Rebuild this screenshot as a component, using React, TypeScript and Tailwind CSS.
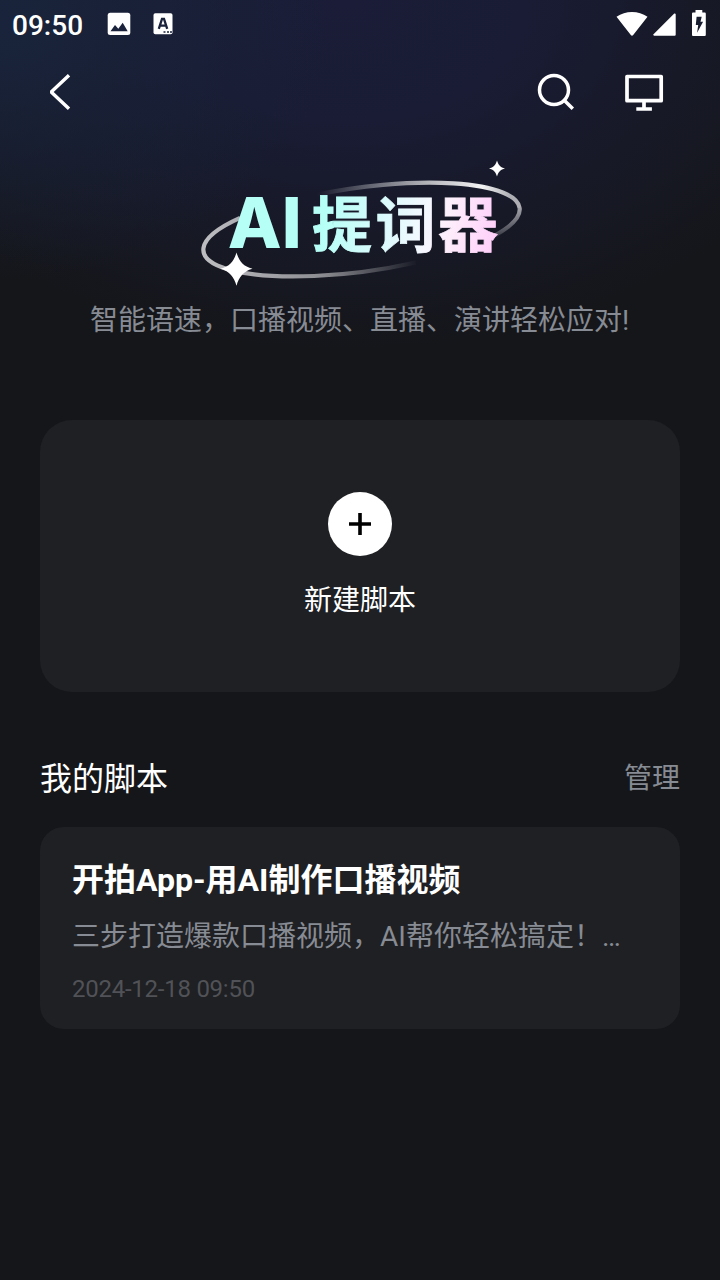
import { clsx } from "clsx";

type Script = {
  id: number;
  title: string;
  preview: string;
  createdAt: string;
};

const scripts: Script[] = [
  {
    id: 1,
    title: "开拍App-用AI制作口播视频",
    preview: "三步打造爆款口播视频，AI帮你轻松搞定！…",
    createdAt: "2024-12-18 09:50"
  }
];

function StatusBar() {
  return (
    <div className="flex h-12 items-center justify-between pl-3 pr-[13px]">
      <div className="flex items-center">
        <span className="w-[95px] pt-1 text-[28px] font-medium leading-[50px] text-white">09:50</span>
        <svg width="24" height="24" viewBox="0 0 24 24" fill="none">
          <rect x="0.7" y="0.7" width="22.6" height="22.4" rx="2.5" fill="#fff" />
          <path d="M3.5 19.2 8 12.9l3.3 3.9 4.4-6.1 5 8.5Z" fill="#1a233b" />
        </svg>
        <svg className="ml-[22px]" width="20" height="24" viewBox="0 0 20 24" fill="none">
          <rect x="0.5" y="1.3" width="19" height="21" rx="1.8" fill="#fff" />
          <path d="m5.8 16.8 3.2-10h2l3.2 10M7 13.7h6" stroke="#1a233b" strokeWidth="2.3" />
          <path d="M10.5 20h2M14 20h2M17 20h2" stroke="#1a233b" strokeWidth="1.6" />
        </svg>
      </div>
      <div className="flex items-center">
        <svg width="32" height="26" viewBox="0 0 32 26" fill="#fff">
          <path d="M0.5 5.8C9.5-.6 22.5-.6 31.5 5.8L17.2 23.9a1.5 1.5 0 0 1-2.4 0Z" />
        </svg>
        <svg className="ml-[5px]" width="23" height="26" viewBox="0 0 23 26" fill="#fff">
          <path d="M22.7 3.2v20.6a1 1 0 0 1-1 1H1.2c-.9 0-1.3-1-.7-1.6L21 2.7c.6-.6 1.7-.3 1.7.5Z" />
        </svg>
        <svg className="ml-[15px]" width="16" height="28" viewBox="0 0 16 28" fill="none">
          <path d="M4.5 0h6.8v2.5h2.2c.8 0 1.3.5 1.3 1.3v20.9c0 .8-.5 1.3-1.3 1.3H2.3c-.8 0-1.3-.5-1.3-1.3V3.8c0-.8.5-1.3 1.3-1.3h2.2Z" fill="#fff" />
          <path d="M5.6 6.8h5.1l-1.2 5h2.6L6.1 22.8l1.1-7.7H4.8Z" fill="#191d30" />
        </svg>
      </div>
    </div>
  );
}

function NavBar() {
  return (
    <header className="flex h-[88px] items-center justify-between pl-10 pr-14">
      <button aria-label="返回">
        <svg width="40" height="40" viewBox="0 0 40 40" fill="none" stroke="#fff" strokeWidth="3.4">
          <path d="M29 3.2 11.2 20 29 36.8" strokeLinejoin="bevel" />
        </svg>
      </button>
      <div className="flex gap-12">
        <button aria-label="搜索">
          <svg width="40" height="40" viewBox="0 0 40 40" fill="none" stroke="#fff" strokeWidth="3.5">
            <circle cx="18" cy="17.9" r="14.5" />
            <path d="m28.2 28.2 8.6 8.6" />
          </svg>
        </button>
        <button aria-label="投屏">
          <svg width="40" height="40" viewBox="0 0 40 40" fill="none" stroke="#fff" strokeWidth="3.7">
            <rect x="3" y="4.5" width="34.2" height="24.2" strokeLinejoin="round" />
            <path d="M20 28.5V36M12.3 37h15.6" />
          </svg>
        </button>
      </div>
    </header>
  );
}

function Logo() {
  return (
    <svg width="340" height="145" viewBox="190 150 340 145" fill="none">
      <defs>
        <linearGradient id="title" gradientUnits="userSpaceOnUse" x1="325" y1="210" x2="495" y2="240">
          <stop offset="0" stopColor="#b5fff7" />
          <stop offset="0.58" stopColor="#f4f8ff" />
          <stop offset="0.72" stopColor="#fdeefb" />
          <stop offset="1" stopColor="#ffcffa" />
        </linearGradient>
        <linearGradient id="ringTop" gradientUnits="userSpaceOnUse" x1="-41" y1="-30" x2="150" y2="0">
          <stop offset="0" stopColor="#fff" stopOpacity="0" />
          <stop offset="0.5" stopColor="#fff" stopOpacity="0.6" />
          <stop offset="0.85" stopColor="#fff" stopOpacity="0.95" />
          <stop offset="1" stopColor="#fff" stopOpacity="0.65" />
        </linearGradient>
        <linearGradient id="ringTail" gradientUnits="userSpaceOnUse" x1="0" y1="-8" x2="0" y2="26">
          <stop offset="0" stopColor="#fff" stopOpacity="0.75" />
          <stop offset="1" stopColor="#fff" stopOpacity="0.15" />
        </linearGradient>
        <linearGradient id="ringBottom" gradientUnits="userSpaceOnUse" x1="-160" y1="0" x2="52" y2="0">
          <stop offset="0" stopColor="#fff" stopOpacity="0.72" />
          <stop offset="0.55" stopColor="#fff" stopOpacity="0.5" />
          <stop offset="1" stopColor="#fff" stopOpacity="0" />
        </linearGradient>
      </defs>
      <g transform="translate(361.5 229.6) rotate(-7.8)" strokeWidth="4.2">
        <path d="M-41.2-40.6A159.6 42 0 0 1 159.6 0" stroke="url(#ringTop)" />
        <path d="M159.6 0A159.6 42 0 0 1 131.2 23.9" stroke="url(#ringTail)" />
        <path d="M-118.7-28.1A159.6 42 0 0 0 49.3 39.9" stroke="url(#ringBottom)" />
      </g>
      <text x="227.8 281.8" y="248" fill="url(#title)" className="font-[Inter,sans-serif] text-[70px] font-extrabold">
        AI
      </text>
      <text
        x="312 375.5 438"
        y="247"
        fill="url(#title)"
        stroke="url(#title)"
        strokeWidth="0.8"
        className="font-['Noto_Sans_CJK_SC',sans-serif] text-[60px] font-bold"
      >
        提词器
      </text>
      <path d="M236.5 252.5c2.6 8.8 6.7 13.8 16 16.3-9.3 2.5-13.4 8.2-16 17-2.6-8.8-6.7-14.5-16-17 9.3-2.5 13.4-7.5 16-16.3Z" fill="#fff" />
      <path d="M497 160.5c1.3 4.6 3.5 7 8 8-4.5 1-6.7 3.4-8 8-1.3-4.6-3.5-7-8-8 4.5-1 6.7-3.4 8-8Z" fill="#fff" />
    </svg>
  );
}

function ScriptCard({ script }: { script: Script }) {
  return (
    <article className="h-[202px] rounded-3xl bg-[#1f2023] px-8 pt-8">
      <h3 className="text-[32px] font-bold leading-[42px] text-white">{script.title}</h3>
      <p className="mt-4 whitespace-nowrap text-[28px] leading-10 text-[#878b93]">{script.preview}</p>
      <p className="mt-3.5 text-2xl leading-9 tracking-[-0.25px] text-[#515257]">{script.createdAt}</p>
    </article>
  );
}

export default function App() {
  return (
    <div
      className={clsx(
        "h-[1280px] w-[720px] overflow-hidden bg-[#15161a]",
        "font-[Roboto,'Noto_Sans_CJK_SC',sans-serif]"
      )}
    >
      <div className="h-[420px] bg-[radial-gradient(ellipse_330px_260px_at_0%_5%,#19243c_0%,transparent_100%),radial-gradient(ellipse_520px_350px_at_48%_0%,#1b1d38_0%,#191c34_35%,transparent_100%)]">
        <StatusBar />
        <NavBar />
        <section className="flex flex-col items-center pt-3.5">
          <Logo />
          <p className="mt-1.5 pr-px text-[28px] leading-10 text-[#878b93]">
            智能语速，口播视频、直播、演讲轻松应对!
          </p>
        </section>
      </div>

      <main className="px-10">
        <button className="flex h-[272px] w-full flex-col items-center rounded-[32px] bg-[#1f2023] pt-[72px]">
          <span className="flex size-16 items-center justify-center rounded-full bg-white">
            <svg width="24" height="24" viewBox="0 0 24 24" stroke="#000" strokeWidth="3.6">
              <path d="M12 1v22M1 12h22" />
            </svg>
          </span>
          <span className="mt-[25px] text-[28px] leading-10 text-white">新建脚本</span>
        </button>

        <div className="mt-[63px] flex h-12 items-center justify-between">
          <h2 className="text-[32px] leading-[48px] text-white">我的脚本</h2>
          <button className="text-[28px] leading-10 text-[#878b93]">管理</button>
        </div>

        <div className="mt-6 space-y-6">
          {scripts.map((script) => (
            <ScriptCard key={script.id} script={script} />
          ))}
        </div>
      </main>
    </div>
  );
}
